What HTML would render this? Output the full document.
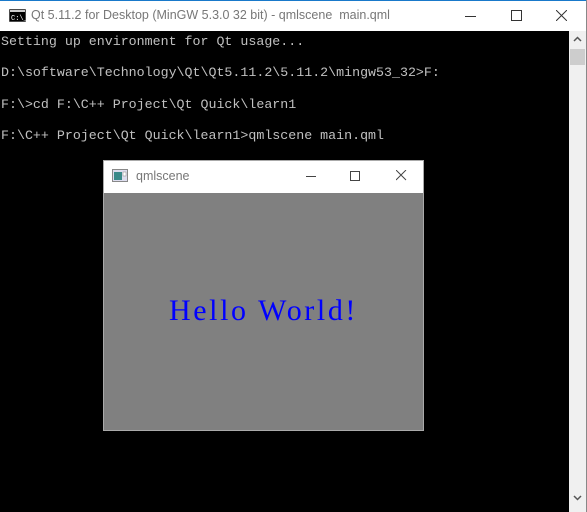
<!DOCTYPE html>
<html><head><style>
body{margin:0;width:587px;height:512px;position:relative;background:#000;overflow:hidden;font-family:"Liberation Sans",sans-serif}
.tb{position:absolute;left:0;top:0;width:587px;height:31px;background:#fff;border-top:1px solid #1979ca;box-sizing:border-box}
.tt{position:absolute;left:31px;top:7px;font-size:12.5px;color:#777}
.term{position:absolute;left:1px;top:34px;font-family:"Liberation Mono",monospace;font-size:13.3px;color:#c0c0c0;line-height:15.7px;white-space:pre}
.sb{position:absolute;left:569px;top:31px;width:17px;height:481px;background:#f0f0f0}
.thumb{position:absolute;left:1px;top:18px;width:15px;height:16px;background:#cdcdcd}
.win{position:absolute;left:103px;top:160px;width:321px;height:271px;background:#808080;border:1px solid #aaa;box-sizing:border-box}
.wt{height:32px;background:#fff;position:relative}
.hello{position:absolute;left:0;right:0;top:133px;text-align:center;font-family:"Liberation Serif",serif;font-size:30px;letter-spacing:2.6px;color:#0000ff}
</style></head><body>
<div class="tb">
<svg style="position:absolute;left:9px;top:8px" width="17" height="13"><rect x="0" y="0" width="17" height="13" fill="#000" stroke="#999"/><rect x="1" y="1" width="15" height="2" fill="#ccc"/><text x="2" y="11" font-size="7" fill="#fff" font-family="Liberation Mono">C:\_</text></svg>
<div class="tt">Qt 5.11.2 for Desktop (MinGW 5.3.0 32 bit) - qmlscene&nbsp; main.qml</div>
<div style="position:absolute;left:465px;top:15px;width:11px;height:1px;background:#333"></div>
<div style="position:absolute;left:511px;top:9px;width:9px;height:9px;border:1px solid #333"></div>
<svg style="position:absolute;left:556px;top:9px" width="11" height="11"><path d="M0 0L11 11M11 0L0 11" stroke="#333"/></svg>
</div>
<div class="term">Setting up environment for Qt usage...

D:\software\Technology\Qt\Qt5.11.2\5.11.2\mingw53_32>F:

F:\>cd F:\C++ Project\Qt Quick\learn1

F:\C++ Project\Qt Quick\learn1>qmlscene main.qml</div>
<div class="sb"><svg style="position:absolute;left:4px;top:5px" width="9" height="6"><path d="M1 5L4.5 1.5L8 5" stroke="#555" stroke-width="1.5" fill="none"/></svg><div class="thumb"></div>
<svg style="position:absolute;left:4px;top:464px" width="9" height="6"><path d="M1 1L4.5 4.5L8 1" stroke="#555" stroke-width="1.5" fill="none"/></svg></div>
<div style="position:absolute;left:586px;top:0;width:1px;height:512px;background:#888"></div>
<div class="win">
<div class="wt">
<svg style="position:absolute;left:8px;top:8px" width="16" height="13"><rect x="0.5" y="0.5" width="15" height="12" fill="#dde" stroke="#888"/><rect x="2" y="3" width="8" height="8" fill="#3a8a8a"/><rect x="11" y="3" width="3" height="4" fill="#fff" stroke="#888" stroke-width=".5"/></svg>
<div style="position:absolute;left:32px;top:8px;font-size:12.5px;color:#777">qmlscene</div>
<div style="position:absolute;left:202px;top:15px;width:10px;height:1px;background:#444"></div>
<div style="position:absolute;left:246px;top:10px;width:8px;height:8px;border:1px solid #444"></div>
<svg style="position:absolute;left:292px;top:9px" width="11" height="11"><path d="M0 0L10 10M10 0L0 10" stroke="#444"/></svg>
</div>
<div class="hello">Hello World!</div>
</div>
</body></html>
